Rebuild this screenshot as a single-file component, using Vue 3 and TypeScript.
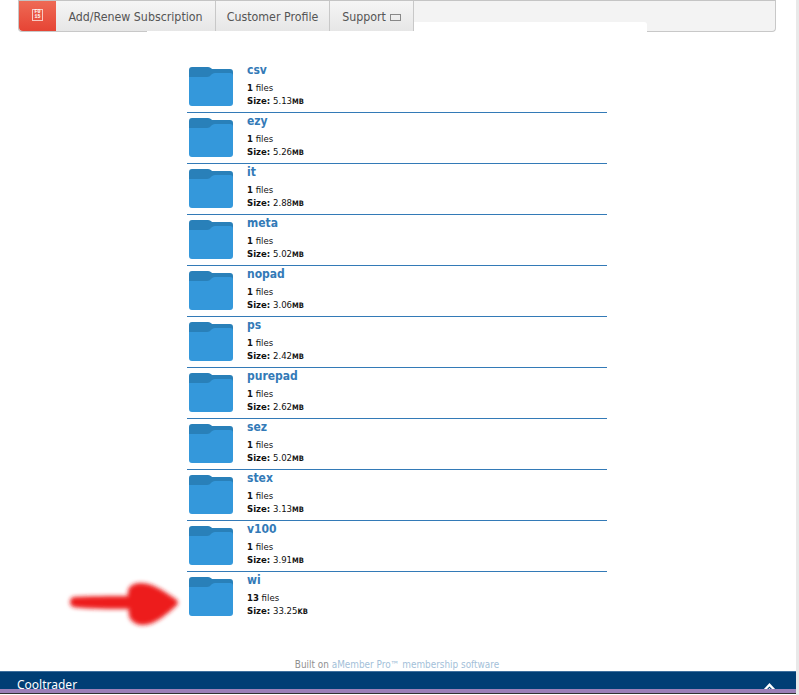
<script setup lang="ts">
const folders = [
  { name: 'csv', files: 1, size: '5.13', unit: 'MB' },
  { name: 'ezy', files: 1, size: '5.26', unit: 'MB' },
  { name: 'it', files: 1, size: '2.88', unit: 'MB' },
  { name: 'meta', files: 1, size: '5.02', unit: 'MB' },
  { name: 'nopad', files: 1, size: '3.06', unit: 'MB' },
  { name: 'ps', files: 1, size: '2.42', unit: 'MB' },
  { name: 'purepad', files: 1, size: '2.62', unit: 'MB' },
  { name: 'sez', files: 1, size: '5.02', unit: 'MB' },
  { name: 'stex', files: 1, size: '3.13', unit: 'MB' },
  { name: 'v100', files: 1, size: '3.91', unit: 'MB' },
  { name: 'wi', files: 13, size: '33.25', unit: 'KB' },
]
</script>

<template>
  <div class="page">
    <div class="shell">
      <nav class="nav">
        <div class="tabs">
          <a class="home"><span class="tofu"><span>F0</span><span>15</span></span></a>
          <a class="tab tab-a">Add/Renew Subscription</a>
          <a class="tab tab-b">Customer Profile</a>
          <a class="tab tab-c">Support <i class="caret"></i></a>
        </div>
      </nav>
      <main class="card">
        <ul class="list">
          <li v-for="f in folders" :key="f.name" class="row">
            <svg class="folder" viewBox="0 0 44 39" width="44" height="39">
              <path d="M0 3a3 3 0 0 1 3-3h16c2 0 3 1 4 2h18a3 3 0 0 1 3 3v8H0z" fill="#2980b9" />
              <path d="M0 10h18c2 0 3-1 4-2 1-1 2-2 4-2h15a3 3 0 0 1 3 3v27a3 3 0 0 1-3 3H3a3 3 0 0 1-3-3z" fill="#3498db" />
            </svg>
            <div class="info">
              <a class="name">{{ f.name }}</a>
              <div class="line files"><b>{{ f.files }}</b> files</div>
              <div class="line"><b>Size:</b> {{ f.size }}<b class="unit">{{ f.unit }}</b></div>
            </div>
          </li>
        </ul>
        <svg class="arrow" viewBox="0 0 120 60" width="120" height="60" aria-hidden="true">
          <defs>
            <filter id="soft" x="-10%" y="-20%" width="120%" height="140%"><feGaussianBlur stdDeviation="2" /></filter>
          </defs>
          <path d="M8 23C25 22 45 22 63 22 62 14 66 9 76 9 88 9 100 18 112 26 113 28 113 30 112 31 102 40 90 51 78 51 68 51 62 44 64 35 45 35 25 35 8 33 4 31 4 25 8 23z" fill="#ed1c1c" filter="url(#soft)" />
        </svg>
      </main>
      <footer class="credit">Built on <a>aMember Pro™ membership software</a></footer>
    </div>
    <div class="bottom">
      <div class="bar">
        <span class="brand">Cooltrader</span>
        <svg class="chev" viewBox="0 0 13 7" width="13" height="7" aria-hidden="true">
          <path d="M0 7 6.5 0 13 7h-3L6.5 3.5 3 7z" fill="#fff" />
          <path d="M4.5 7 6.5 5 8.5 7z" fill="#fff" />
        </svg>
      </div>
      <div class="strip"></div>
      <div class="dark"></div>
    </div>
  </div>
</template>

<style>
html, body { margin: 0; padding: 0; background: #fff; overflow: hidden; }
</style>

<style scoped>
.page {
  width: 799px;
  height: 695px;
  position: relative;
  overflow: hidden;
  box-sizing: border-box;
  border-right: 3px solid #e9e9e9;
  font-family: "DejaVu Sans", sans-serif;
  color: #222;
}
.shell { width: 796px; }
.nav {
  box-sizing: border-box;
  margin-left: 18px;
  width: 758px;
  height: 32px;
  background: #f3f3f3;
  border: 1px solid #c8c8c8;
  border-top-color: #c4c4c4;
  border-radius: 0 0 4px 4px;
}
.tabs { display: flex; height: 30px; position: relative; z-index: 2; }
.home {
  width: 37px;
  display: flex;
  align-items: center;
  justify-content: center;
  background: linear-gradient(#ee6a55, #e64434);
  border-radius: 0 0 0 4px;
}
.tofu {
  box-sizing: border-box;
  width: 11px;
  height: 12px;
  border: 1px solid #f7c9c2;
  margin-top: -2px;
  display: flex;
  flex-direction: column;
  align-items: center;
  justify-content: center;
  color: #fff;
  font: 700 5px/5px "Liberation Mono", monospace;
}
.tab {
  box-sizing: border-box;
  display: flex;
  align-items: center;
  justify-content: center;
  padding-top: 2px;
  background: linear-gradient(#f5f5f5, #e6e6e6);
  border-right: 1px solid #c8c8c8;
  font-family: "DejaVu Sans Condensed", "DejaVu Sans", sans-serif;
  font-stretch: condensed;
  font-size: 12.3px;
  color: #555;
}
.tab-a { width: 160px; }
.tab-b { width: 114px; }
.tab-c { width: 84px; }
.caret {
  display: inline-block;
  width: 9px;
  height: 5px;
  border: 1px solid #888;
  margin-left: 4px;
  margin-top: 1px;
}
.card {
  position: relative;
  z-index: 1;
  margin: -10px 0 0 147px;
  width: 500px;
  height: 622px;
  background: #fff;
  border-radius: 3px 3px 0 0;
  box-sizing: border-box;
  padding: 40px 40px 0;
}
.list { list-style: none; margin: 0; padding: 0; width: 420px; }
.row {
  box-sizing: border-box;
  height: 51px;
  display: flex;
  padding: 5px 0 0 2px;
  border-bottom: 1px solid #337ab7;
}
.row:last-child { border-bottom: 0; }
.folder { display: block; flex: none; }
.info { margin-left: 14px; }
.name {
  display: block;
  color: #337ab7;
  font-family: "DejaVu Sans Condensed", "DejaVu Sans", sans-serif;
  font-stretch: condensed;
  font-weight: 700;
  font-size: 12px;
  line-height: 16px;
  margin-top: -5px;
  margin-bottom: 3px;
}
.line {
  font-family: "DejaVu Sans Condensed", "DejaVu Sans", sans-serif;
  font-stretch: condensed;
  font-size: 9.5px;
  line-height: 13px;
  color: #111;
  white-space: nowrap;
}
.unit { font-size: 7.5px; }
.arrow { position: absolute; left: -82px; top: 552px; }
.credit {
  position: absolute;
  top: 658px;
  left: 0;
  width: 794px;
  text-align: center;
  font-family: "DejaVu Sans Condensed", "DejaVu Sans", sans-serif;
  font-stretch: condensed;
  font-size: 9.9px;
  line-height: 13px;
  color: #8f8f8f;
}
.credit a { color: #a3bfd9; }
.bottom {
  position: absolute;
  left: 0;
  top: 671px;
  width: 796px;
  z-index: 3;
}
.bar {
  box-sizing: border-box;
  height: 18px;
  background: #003e75;
  border-top: 1px solid #3e6f9e;
  display: flex;
  justify-content: space-between;
  overflow: hidden;
  padding: 0 20px 0 17px;
  color: #fff;
  font: 12px/16px "Noto Sans", sans-serif;
}
.brand { margin-top: 5px; }
.chev { margin-top: 11px; }
.strip { height: 4px; background: #9c80b8; }
.dark { height: 1px; background: #333; }
</style>
